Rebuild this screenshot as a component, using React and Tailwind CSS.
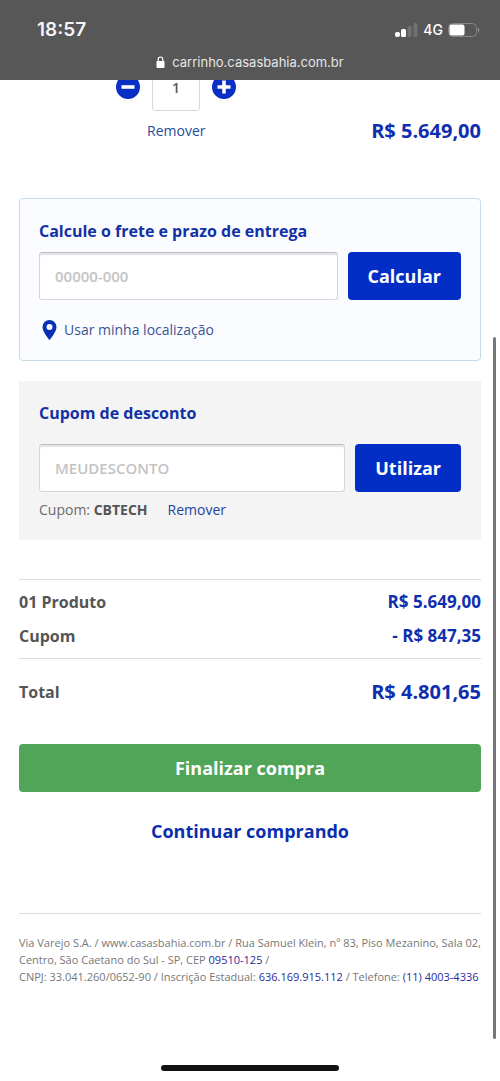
const StatusBar = () => (
    <header className="relative z-10 h-20 shrink-0 bg-[#575757] font-['Inter',sans-serif] text-white">
        <div className="flex items-center justify-between pt-[18px] pr-5 pl-[37px]">
            <span className="text-[19px] leading-6 font-semibold text-[#f4f4f4]">18:57</span>
            <div className="flex items-center gap-[5px]">
                <svg width="23" height="14" viewBox="0 0 23 14" aria-hidden="true">
                    <rect x="0" y="9" width="5" height="5" rx="2" fill="#fff" />
                    <rect x="6" y="6" width="5" height="8" rx="1.5" fill="#fff" />
                    <rect x="12.5" y="3" width="4" height="11" rx="1.5" fill="#717171" />
                    <rect x="18.5" y="0" width="4" height="14" rx="1.5" fill="#717171" />
                </svg>
                <span className="text-[14px] leading-6 font-medium">4G</span>
                <svg width="32" height="14" viewBox="0 0 32 14" aria-hidden="true">
                    <rect x="0.5" y="0.5" width="28" height="13" rx="4" fill="none" stroke="#858585" />
                    <rect x="1.5" y="1.500" width="15" height="11" rx="2" fill="#fff" />
                    <path d="M30 4.500c1.600.6 1.600 4.400 0 5z" fill="#9a9a9a" />
                </svg>
            </div>
        </div>
        <div className="mt-[10px] flex items-center justify-center gap-[7px]">
            <svg width="9" height="12" viewBox="0 0 9 12" aria-hidden="true">
                <rect x="0.5" y="5" width="8" height="7" rx="1" fill="#fff" />
                <path d="M2.2 5.500V3.300a2.300 2.300 0 0 1 4.600 0v2.200" fill="none" stroke="#fff" strokeWidth="1.2" />
            </svg>
            <span className="text-[13px] leading-5 text-[#e6e6e6]">carrinho.casasbahia.com.br</span>
        </div>
    </header>
);

const StepButton = ({ label, plus }) => (
    <button type="button" aria-label={label} className="size-6">
        <svg width="24" height="24" viewBox="0 0 24 24">
            <circle cx="12" cy="12" r="12" fill="#0a2fc4" />
            <path d={plus ? 'M5.5 12h13M12 5.5v13' : 'M5.5 12h13'} stroke="#fff" strokeWidth="3.6" />
        </svg>
    </button>
);

const CartItem = () => (
    <section className="-mt-[17px]">
        <div className="ml-[97px] flex w-[120px] items-center justify-between">
            <StepButton label="Diminuir quantidade" />
            <input
                aria-label="Quantidade"
                defaultValue="1"
                className="h-12 w-12 rounded-[3px] border border-[#d5d8dc] bg-white text-center text-sm font-semibold text-[#555]"
            />
            <StepButton label="Aumentar quantidade" plus />
        </div>
        <div className="mt-2 flex items-center justify-between">
            <a href="#remover" className="ml-32 text-sm leading-6 text-[#1f4a9c]">Remover</a>
            <span className="text-xl leading-6 font-bold text-[#0f2fae]">R$ 5.649,00</span>
        </div>
    </section>
);

const Field = ({ id, placeholder, action }) => (
    <div className="flex gap-[10px]">
        <input
            id={id}
            placeholder={placeholder}
            className="h-12 min-w-0 flex-1 rounded-[3px] border border-[#d3d6da] border-t-[#bfc1c4] bg-white px-[15px] text-[15px] font-semibold shadow-[inset_0_2px_1px_#e3e3e3] placeholder:text-[#c3c3c3]"
        />
        <button type="submit" className="h-12 rounded-[4px] bg-[#022ec6] px-5 text-lg font-bold text-white">
            {action}
        </button>
    </div>
);

const Shipping = () => (
    <form className="mt-[55px] rounded-[4px] border border-[#c5dce6] bg-[#fafcff] px-[19px] pt-5 pb-[18px]">
        <label htmlFor="cep" className="mb-[9px] block text-base leading-6 font-bold text-[#1231a5]">
            Calcule o frete e prazo de entrega
        </label>
        <Field id="cep" placeholder="00000-000" action="Calcular" />
        <a href="#localizacao" className="mt-[18px] flex items-center gap-[7px] text-sm leading-6 text-[#3a5594]">
            <svg width="15" height="20" viewBox="0 0 15 20" className="ml-[3px]" aria-hidden="true">
                <path
                    d="M7.5 0A7 7 0 0 0 .5 7c0 5 7 13 7 13s7-8 7-13a7 7 0 0 0-7-7zm0 4a3 3 0 1 1 0 6 3 3 0 0 1 0-6z"
                    fill="#0a2fb4"
                />
            </svg>
            Usar minha localização
        </a>
    </form>
);

const Coupon = () => (
    <form className="mt-5 bg-[#f4f4f4] p-5">
        <label htmlFor="cupom" className="mb-[19px] block text-base leading-6 font-bold text-[#1231a5]">
            Cupom de desconto
        </label>
        <Field id="cupom" placeholder="MEUDESCONTO" action="Utilizar" />
        <p className="mt-2 flex gap-5 text-sm leading-5 text-[#6b6b6b]">
            <span>
                Cupom: <strong className="font-bold text-[#555]">CBTECH</strong>
            </span>
            <a href="#remover-cupom" className="text-[#1f44a0]">Remover</a>
        </p>
    </form>
);

const Row = ({ label, value }) => (
    <div className="flex items-center justify-between font-bold">
        <dt className="text-base leading-[34px] text-[#555]">{label}</dt>
        <dd className="text-[17px] leading-[34px] text-[#0f2fae]">{value}</dd>
    </div>
);

const Summary = () => (
    <dl className="mt-[39px]">
        <div className="border-y border-[#dcdcdc] py-[5px]">
            <Row label="01 Produto" value="R$ 5.649,00" />
            <Row label="Cupom" value="- R$ 847,35" />
        </div>
        <div className="flex items-center justify-between py-4 font-bold">
            <dt className="text-base leading-[34px] text-[#555]">Total</dt>
            <dd className="text-xl leading-[34px] text-[#0f2fae]">R$ 4.801,65</dd>
        </div>
    </dl>
);

const Legal = () => (
    <footer className="mt-[70px] border-t border-[#dcdcdc] pt-5 text-[11px] leading-[17px] text-[#777]">
        <p>
            Via Varejo S.A. / www.casasbahia.com.br / Rua Samuel Klein, nº 83, Piso Mezanino, Sala 02,{' '}
            <br />
            Centro, São Caetano do Sul - SP, CEP <a href="tel:09510125" className="text-[#2a2a9c]">09510-125</a> /
            <br />
            CNPJ: 33.041.260/0652-90 / Inscrição Estadual:{' '}
            <a href="tel:636169915112" className="text-[#2a2a9c]">636.169.915.112</a> / Telefone:{' '}
            <a href="tel:1140034336" className="text-[#2a2a9c]">(11) 4003-4336</a>
        </p>
    </footer>
);

const App = () => {
    return (
        <div className="flex min-h-screen flex-col bg-white font-['Open_Sans',sans-serif]">
            <StatusBar />
            <main className="px-[19px]">
                <CartItem />
                <Shipping />
                <Coupon />
                <Summary />
                <button type="button" className="mt-[19px] h-12 w-full rounded-[4px] bg-[#51a558] text-lg font-bold text-white">
                    Finalizar compra
                </button>
                <a href="#continuar" className="mt-[27px] block text-center text-lg leading-6 font-bold text-[#0a2fae]">
                    Continuar comprando
                </a>
                <Legal />
            </main>

            {/* home indicator */}
            <div className="mx-auto mt-auto mb-[10px] h-[6px] w-[178px] rounded-full bg-[#111]" />

            {/* scroll thumb */}
            <div className="fixed top-[337px] right-1 bottom-[42px] w-[3px] rounded-full bg-[#777]" />
        </div>
    );
};

export default App;
